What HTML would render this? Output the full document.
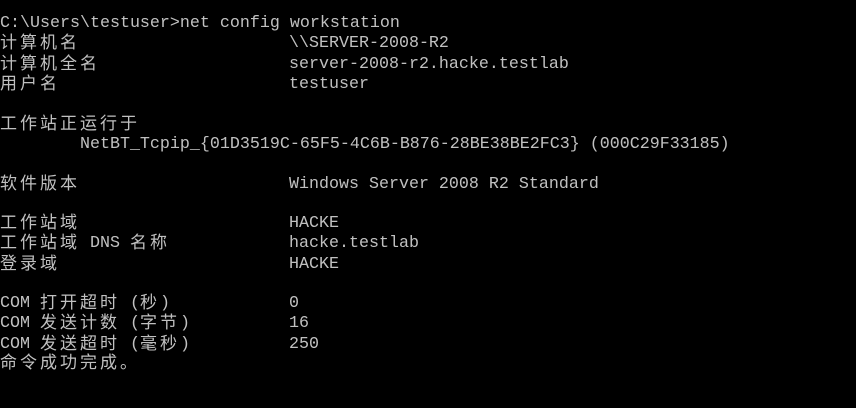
<!DOCTYPE html>
<html><head><meta charset="utf-8"><style>
html,body{margin:0;padding:0;background:#000;width:856px;height:408px;overflow:hidden}
.l{position:absolute;left:0;height:20px;line-height:20px;white-space:pre;color:#c0c0c0;font-family:"Liberation Mono",monospace;font-size:16.67px}
.t{position:absolute;left:0;top:2px;height:20px;line-height:20px}
.c{display:inline-block;vertical-align:top;height:20px;line-height:20px;margin-top:-1px;font-family:"Noto Sans CJK SC","WenQuanYi Zen Hei",sans-serif;font-size:17px;letter-spacing:3px}
.t .c{margin-top:-3px}
.v{position:absolute;left:289px;top:2px}
</style></head><body>
<div class="l" style="top:12px"><span class="t">C:\Users\testuser&gt;net config workstation</span></div>
<div class="l" style="top:32px"><span class="c">计算机名</span><span class="v">\\SERVER-2008-R2</span></div>
<div class="l" style="top:53px"><span class="c">计算机全名</span><span class="v">server-2008-r2.hacke.testlab</span></div>
<div class="l" style="top:73px"><span class="c">用户名</span><span class="v">testuser</span></div>
<div class="l" style="top:113px"><span class="c">工作站正运行于</span></div>
<div class="l" style="top:133px"><span class="t">        NetBT_Tcpip_{01D3519C-65F5-4C6B-B876-28BE38BE2FC3} (000C29F33185)</span></div>
<div class="l" style="top:173px"><span class="c">软件版本</span><span class="v">Windows Server 2008 R2 Standard</span></div>
<div class="l" style="top:212px"><span class="c">工作站域</span><span class="v">HACKE</span></div>
<div class="l" style="top:232px"><span class="t"><span class="c">工作站域</span> DNS <span class="c">名称</span></span><span class="v">hacke.testlab</span></div>
<div class="l" style="top:253px"><span class="c">登录域</span><span class="v">HACKE</span></div>
<div class="l" style="top:292px"><span class="t">COM <span class="c">打开超时</span> (<span class="c">秒</span>)</span><span class="v">0</span></div>
<div class="l" style="top:312px"><span class="t">COM <span class="c">发送计数</span> (<span class="c">字节</span>)</span><span class="v">16</span></div>
<div class="l" style="top:333px"><span class="t">COM <span class="c">发送超时</span> (<span class="c">毫秒</span>)</span><span class="v">250</span></div>
<div class="l" style="top:352px"><span class="c">命令成功完成。</span></div>
</body></html>
